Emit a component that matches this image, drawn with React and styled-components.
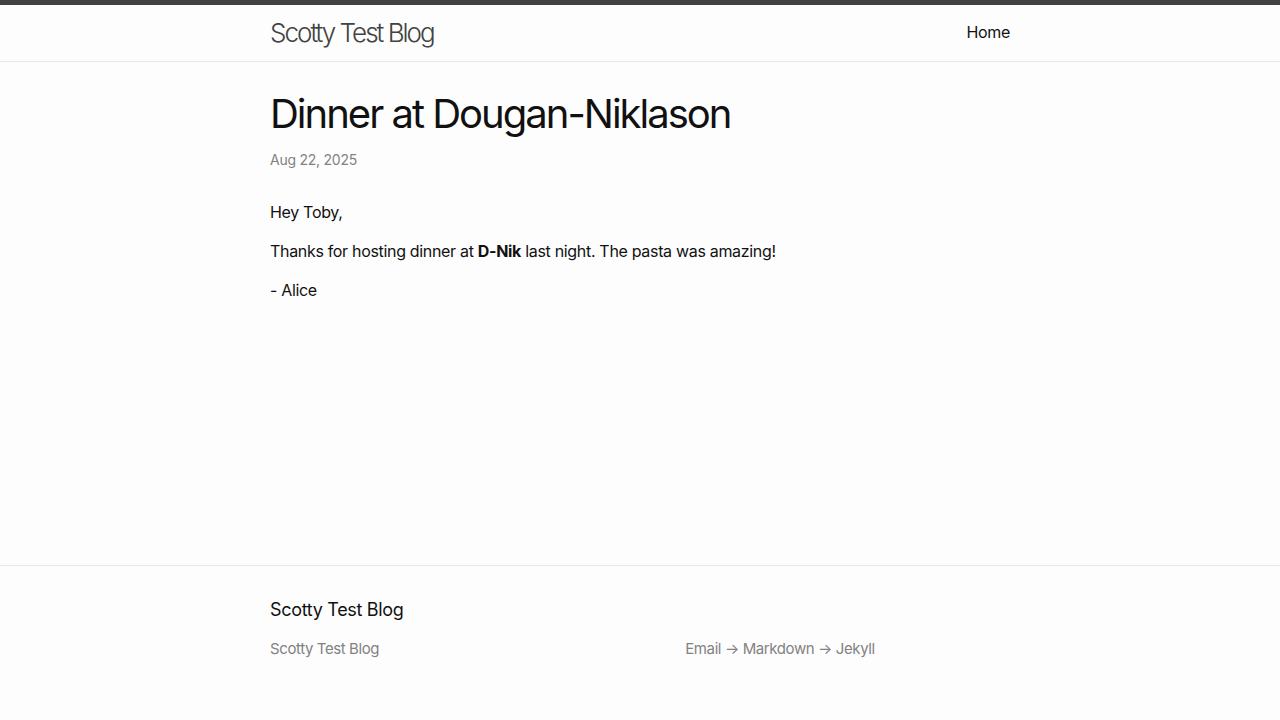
import React from "react";
import styled, { createGlobalStyle } from "styled-components";

const Global = createGlobalStyle`
  html, body { margin: 0; padding: 0; }
  body {
    font-family: Inter, "Noto Sans", "Liberation Sans", sans-serif;
    font-size: 16px;
    line-height: 1.5;
    font-weight: 400;
    letter-spacing: -0.32px;
    color: #111111;
    background: #fdfdfd;
  }
  * { box-sizing: border-box; }
`;

const Page = styled.div`
  display: flex;
  flex-direction: column;
  min-height: 100vh;
`;

const Wrapper = styled.div`
  max-width: 800px;
  margin: 0 auto;
  padding: 0 30px;
`;

const Header = styled.header`
  border-top: 5px solid #424242;
  border-bottom: 1px solid #e8e8e8;
  min-height: 62px;
`;

const HeaderInner = styled(Wrapper)`
  display: flex;
  justify-content: space-between;
  align-items: flex-start;
`;

const SiteTitle = styled.a`
  font-size: 26px;
  font-weight: 300;
  line-height: 56px;
  letter-spacing: -2px;
  color: #424242;
  text-decoration: none;
`;

const Nav = styled.nav`
  line-height: 54px;
  display: flex;
  gap: 20px;
`;

const NavLink = styled.a`
  color: #111111;
  text-decoration: none;
  line-height: 1.5;
  display: inline-block;
  padding-top: 15px;
`;

const Main = styled.main`
  flex: 1;
  padding: 30px 0;
`;

const PostHeader = styled.header`
  margin-bottom: 30px;
`;

const PostTitle = styled.h1`
  font-size: 40px;
  font-weight: 400;
  letter-spacing: -2px;
  line-height: 1;
  margin: 0 0 15px;
  padding-top: 2px;
`;

const PostMeta = styled.p`
  font-size: 14px;
  color: #828282;
  letter-spacing: -0.25px;
  margin: 0;
`;

const Para = styled.p`
  margin: 0 0 15px;
`;

const Footer = styled.footer`
  border-top: 1px solid #e8e8e8;
  padding: 30px 0;
`;

const FooterHeading = styled.h2`
  font-size: 18px;
  font-weight: 400;
  line-height: 1.5;
  margin: 0 0 15px;
`;

const FooterCols = styled.div`
  display: flex;
  font-size: 15px;
  color: #828282;
  letter-spacing: -0.4px;
  margin-left: -15px;
`;

const FooterCol = styled.div`
  flex: 0 0 ${(p) => p.$w};
  padding-left: 15px;
  margin-bottom: 15px;
`;

const ContactList = styled.ul`
  list-style: none;
  margin: 0 0 15px;
  padding: 0;
`;

const Description = styled.p`
  margin: 0 0 15px;
`;

export default function App() {
  return (
    <>
      <Global />
      <Page>
        <Header>
          <HeaderInner>
            <SiteTitle href="#">Scotty Test Blog</SiteTitle>
            <Nav>
              <NavLink href="#">Home</NavLink>
            </Nav>
          </HeaderInner>
        </Header>
        <Main>
          <Wrapper>
            <article>
              <PostHeader>
                <PostTitle>Dinner at Dougan-Niklason</PostTitle>
                <PostMeta>Aug 22, 2025</PostMeta>
              </PostHeader>
              <div>
                <Para>Hey Toby,</Para>
                <Para>
                  Thanks for hosting dinner at <strong>D-Nik</strong> last night. The pasta was amazing!
                </Para>
                <Para>- Alice</Para>
              </div>
            </article>
          </Wrapper>
        </Main>
        <Footer>
          <Wrapper>
            <FooterHeading>Scotty Test Blog</FooterHeading>
            <FooterCols>
              <FooterCol $w="35%">
                <ContactList>
                  <li>Scotty Test Blog</li>
                </ContactList>
              </FooterCol>
              <FooterCol $w="20%" />
              <FooterCol $w="45%">
                <Description>Email → Markdown → Jekyll</Description>
              </FooterCol>
            </FooterCols>
          </Wrapper>
        </Footer>
      </Page>
    </>
  );
}
